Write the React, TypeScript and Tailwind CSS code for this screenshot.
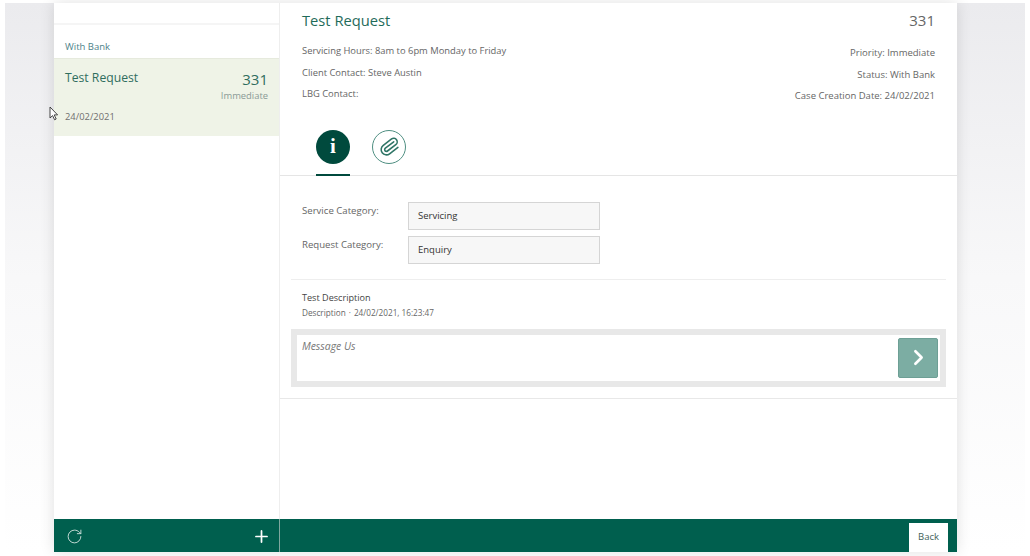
import { ChevronRight, Paperclip, Plus, RotateCw } from "lucide-react";

const font = "font-['Open_Sans',sans-serif]";

function InfoLine({ children }: { children: React.ReactNode }) {
  return <p className="h-[21.5px] leading-[21px] text-[#666]">{children}</p>;
}

function CategoryRow({ label, value }: { label: string; value: string }) {
  return (
    <div className="flex h-[34px] items-start">
      <span className="w-[106px] pt-[2px] text-[9.6px] leading-[14px] text-[#666]">{label}</span>
      <div className="flex h-[28px] w-[192px] items-center border border-[#d5d5d5] bg-[#f7f7f7] pl-[9px] pt-[2px] text-[9.5px] text-[#333]">
        {value}
      </div>
    </div>
  );
}

function Sidebar() {
  return (
    <aside className="flex w-[226px] shrink-0 flex-col border-r border-[#eeeeee]">
      <div className="h-[22px] border-b-2 border-[#f5f5f5]" />
      <div className="flex h-[33px] items-end pb-[4px] pl-[11px] text-[9.5px] text-[#4d8289]">With Bank</div>
      <div className="h-[78px] border-t border-[#e6eadd] bg-[#eff3e7] px-[11px]">
        <div className="flex justify-between pt-[9px]">
          <span className="text-[12.2px] leading-[20px] text-[#2f6d5e]">Test Request</span>
          <span className="text-[15px] leading-[22px] text-[#2f6d5e]">331</span>
        </div>
        <div className="text-right text-[9.4px] leading-[12px] text-[#8a9a96]">Immediate</div>
        <div className="pt-[8px] text-[9.4px] leading-[14px] text-[#6f6f6f]">24/02/2021</div>
      </div>
    </aside>
  );
}

function Detail() {
  return (
    <main className="flex min-w-0 flex-1 flex-col">
      <header className="flex justify-between px-[22px] pt-[7px]">
        <div className="text-[9.4px]">
          <h1 className="h-[30px] text-[14.7px] leading-[20px] text-[#1f6b5a]">Test Request</h1>
          <InfoLine>Servicing Hours: 8am to 6pm Monday to Friday</InfoLine>
          <InfoLine>Client Contact: Steve Austin</InfoLine>
          <InfoLine>LBG Contact:</InfoLine>
        </div>
        <div className="text-right text-[9.5px]">
          <div className="h-[32px] text-[15px] leading-[20px] text-[#666]">331</div>
          <InfoLine>Priority: Immediate</InfoLine>
          <InfoLine>Status: With Bank</InfoLine>
          <InfoLine>Case Creation Date: 24/02/2021</InfoLine>
        </div>
      </header>

      {/* Tabs */}
      <div className="mt-[23px] flex h-[46px] gap-[22px] border-b border-[#e5e5e5] pl-[36px]">
        <div className="h-[46px] w-[34px] border-b-2 border-[#004a3d]">
          <div className="flex h-[34px] w-[34px] items-center justify-center rounded-full bg-[#004a3d] font-['Liberation_Serif',serif] text-[21px] font-bold text-white">
            i
          </div>
        </div>
        <div className="flex h-[34px] w-[34px] items-center justify-center rounded-full border border-[#4f8f82] text-[#2f7566]">
          <Paperclip size={21} strokeWidth={1.8} className="rotate-[8deg]" />
        </div>
      </div>

      <section className="mx-[11px] border-b border-[#eeeeee] pl-[11px] pt-[26px]">
        <CategoryRow label="Service Category:" value="Servicing" />
        <CategoryRow label="Request Category:" value="Enquiry" />
        <div className="h-[9px]" />
      </section>

      <section className="pl-[22px] pt-[11px]">
        <div className="text-[9.1px] leading-[14px] text-[#444]">Test Description</div>
        <div className="pt-[2px] text-[8.2px] leading-[12px] text-[#666]">
          Description<span className="mx-[3px]">·</span>24/02/2021, 16:23:47
        </div>
      </section>

      <div className="mx-[11px] mt-[10px] flex h-[58px] border-[6px] border-[#e8e8e8] bg-white pl-[5px]">
        <span className="pt-[4px] text-[10.4px] italic leading-[14px] text-[#777]">Message Us</span>
        <button className="ml-auto mr-[2px] mt-[3px] flex h-[40px] w-[40px] items-center justify-center rounded-[2px] border border-[#6d9f95] bg-[#7cada3] text-white">
          <ChevronRight size={25} strokeWidth={2.5} />
        </button>
      </div>

      <div className="mt-[11px] border-b border-[#e8e8e8]" />
    </main>
  );
}

export default function App() {
  return (
    <div className={`relative h-[556px] w-[1030px] overflow-hidden bg-white ${font}`}>
      <div className="mx-[5px] mt-[3px] h-[549px] bg-gradient-to-b from-[#ebebee] via-[#f8f8f9] to-white pl-[49px]">
        <div className="flex h-full w-[903px] flex-col bg-white shadow-[0_0_14px_rgba(0,0,0,0.12)]">
          <div className="flex min-h-0 flex-1">
            <Sidebar />
            <Detail />
          </div>
          <footer className="flex h-[33px] shrink-0 items-center bg-[#005f4e]">
            <div className="flex h-full w-[226px] items-center justify-between border-r border-[#7fa79e] pl-[12px] pr-[8px] pt-[2px]">
              <RotateCw size={17} strokeWidth={1.3} className="text-[#cfe0dc]" />
              <Plus size={19} strokeWidth={2.2} className="text-white" />
            </div>
            <button className="ml-auto mr-[9px] mt-[4px] h-[29px] w-[39px] bg-white text-[9.5px] text-[#3f5f5a]">Back</button>
          </footer>
        </div>
      </div>
      {/* pointer captured in the recording */}
      <svg className="absolute left-[49px] top-[106px]" width="10" height="15" viewBox="0 0 10 15">
        <path d="M1 1v11l2.6-2.4 2 4.2 1.6-.8-2-4.1h3.4z" fill="#fff" stroke="#333" strokeWidth="0.9" />
      </svg>
    </div>
  );
}
